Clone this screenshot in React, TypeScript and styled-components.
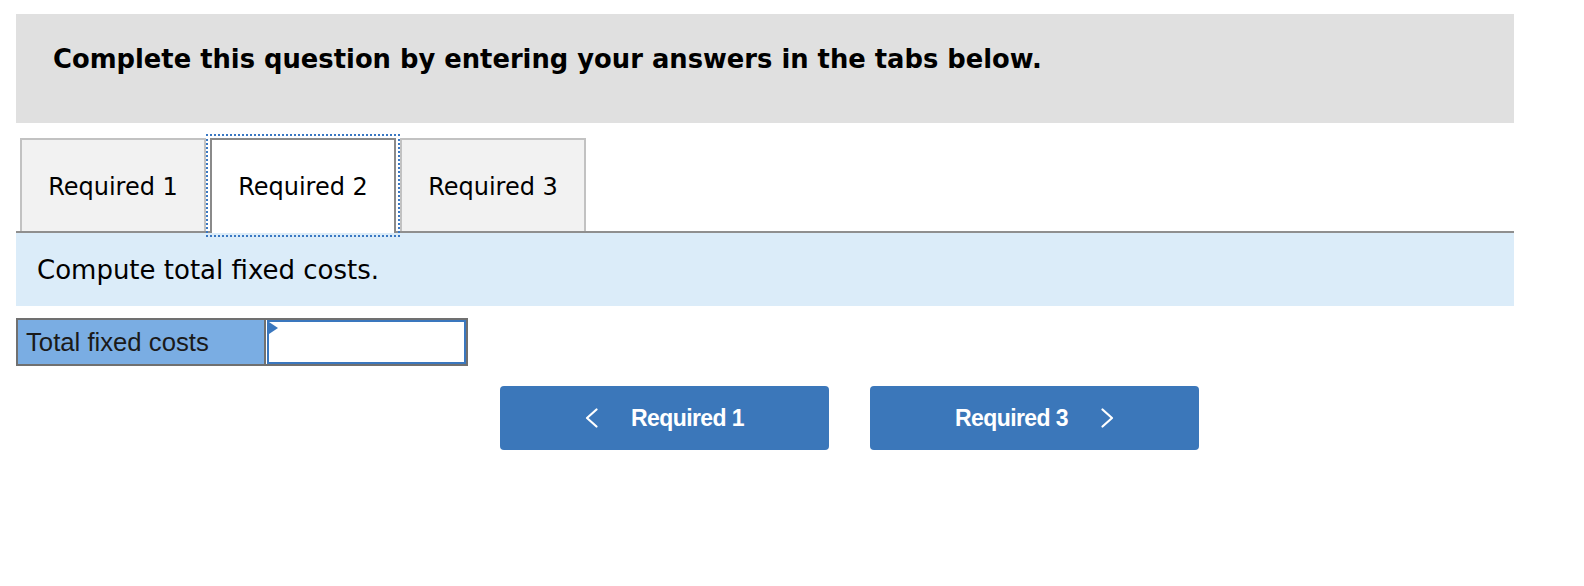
import { FunctionComponent } from 'react';
import styled, { createGlobalStyle } from 'styled-components';

const GlobalStyle = createGlobalStyle`
    body {
        margin: 0;
        background: #ffffff;
        font-family: 'DejaVu Sans', Verdana, sans-serif;
    }
`;

const tabs = ['Required 1', 'Required 2', 'Required 3'];

const Chevron: FunctionComponent<{ dir: 'left' | 'right' }> = ({ dir }) => (
    <svg width="13" height="20" viewBox="0 0 13 20" fill="none">
        <polyline
            points={dir === 'left' ? '11.5,1.5 2,10 11.5,18.5' : '1.5,1.5 11,10 1.5,18.5'}
            stroke="#ffffff"
            strokeWidth="2.2"
            strokeLinecap="round"
            strokeLinejoin="round"
        />
    </svg>
);

export default function App() {
    return (
        <>
            <GlobalStyle />
            <SPage>
                <SHeader>Complete this question by entering your answers in the tabs below.</SHeader>

                <STabList>
                    {tabs.map((t) => (
                        <STab key={t} $active={t === 'Required 2'}>{t}</STab>
                    ))}
                </STabList>

                <SPrompt>Compute total fixed costs.</SPrompt>

                <SAnswerRow>
                    <SLabel>Total fixed costs</SLabel>
                    <SInputCell>
                        <SMarker />
                        <SInput type="text" />
                    </SInputCell>
                </SAnswerRow>

                <SNavRow>
                    <SNavButton>
                        <Chevron dir="left" />
                        <span>Required 1</span>
                    </SNavButton>
                    <SNavButton>
                        <span>Required 3</span>
                        <Chevron dir="right" />
                    </SNavButton>
                </SNavRow>
            </SPage>
        </>
    );
}

const SPage = styled.div`
    width: 1498px;
    padding: 14px 0 0 16px;
`;

const SHeader = styled.div`
    height: 109px;
    box-sizing: border-box;
    background: #e0e0e0;
    padding: 30px 0 0 37px;
    font-size: 25.8px;
    line-height: 30px;
    font-weight: bold;
    color: #000;
`;

const STabList = styled.div`
    margin-top: 15px;
    display: flex;
    align-items: flex-end;
    border-bottom: 2px solid #8f8f8f;
`;

const STab = styled.div<{ $active?: boolean }>`
    box-sizing: border-box;
    width: 186px;
    margin-left: 4px;
    display: flex;
    align-items: center;
    justify-content: center;
    padding-top: ${(p) => (p.$active ? '0' : '3px')};
    font-size: 24px;
    color: #000;
    background: ${(p) => (p.$active ? '#ffffff' : '#f2f2f2')};
    border: 2px solid ${(p) => (p.$active ? '#8a8a8a' : '#c2c2c2')};
    border-bottom: 0;
    height: ${(p) => (p.$active ? '95px' : '93px')};
    margin-bottom: ${(p) => (p.$active ? '-2px' : '0')};
    outline: ${(p) => (p.$active ? '2px dotted #3a78c3' : 'none')};
    outline-offset: 2px;
    position: relative;
    z-index: ${(p) => (p.$active ? 1 : 0)};
`;

const SPrompt = styled.div`
    height: 73px;
    display: flex;
    align-items: center;
    padding-left: 21px;
    background: #dbecf9;
    font-size: 26px;
    color: #000;
`;

const SAnswerRow = styled.div`
    margin-top: 12px;
    width: 452px;
    height: 48px;
    box-sizing: border-box;
    border: 2px solid #707070;
    display: flex;
`;

const SLabel = styled.div`
    width: 248px;
    border-right: 2px solid #707070;
    background: #7aade3;
    display: flex;
    align-items: center;
    padding-left: 8px;
    box-sizing: border-box;
    font-family: 'Liberation Sans', Arial, sans-serif;
    font-size: 25.7px;
    color: #1a1a1a;
`;

const SInputCell = styled.div`
    flex: 1;
    position: relative;
    display: flex;
    padding: 0 0 0 1px;
`;

const SInput = styled.input`
    flex: 1;
    margin: 0;
    border: 2px solid #3a77be;
    background: #fff;
    outline: none;
`;

const SMarker = styled.span`
    position: absolute;
    left: 3px;
    top: 2px;
    width: 0;
    height: 0;
    border-left: 9px solid #3a77be;
    border-top: 6px solid transparent;
    border-bottom: 6px solid transparent;
`;

const SNavRow = styled.div`
    margin-top: 20px;
    padding-left: 484px;
    display: flex;
    gap: 41px;
`;

const SNavButton = styled.button`
    width: 329px;
    height: 64px;
    border: none;
    border-radius: 4px;
    background: #3b77ba;
    color: #fff;
    display: flex;
    align-items: center;
    justify-content: center;
    gap: 33px;
    font-family: 'Liberation Sans', Arial, sans-serif;
    font-weight: bold;
    font-size: 23px;
    letter-spacing: -0.6px;
    cursor: pointer;
`;
